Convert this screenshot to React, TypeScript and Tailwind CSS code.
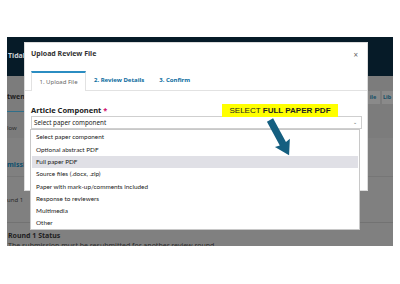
import React from 'react';

const options = [
  'Select paper component',
  'Optional abstract PDF',
  'Full paper PDF',
  'Source files (.docx, .zip)',
  'Paper with mark-up/comments included',
  'Response to reviewers',
  'Multimedia',
  'Other',
];

const Arrow = () => (
  <svg width="45" height="48" viewBox="0 0 45 48" className="absolute left-[255px] top-[115px]">
    <g transform="translate(15,5) rotate(-28.5)">
      <polygon points="-3.5,0 3.5,0 3.5,27 8.5,26 0,40 -8.5,26 -3.5,27" fill="#155f80" />
    </g>
  </svg>
);

const Modal = () => (
  <div className="absolute left-[17px] top-[5px] w-[344px] h-[149px] bg-white border border-[#dcdcdc] font-['Noto_Sans',sans-serif] text-[#222]">
    <div className="flex items-center justify-between pl-[6px] pr-[9px] pt-[3px] h-[20px]">
      <span className="text-[7px] font-bold text-[#333]">Upload Review File</span>
      <span className="text-[8px] leading-none text-[#666]">×</span>
    </div>
    <div className="mt-[8px] flex items-end h-[20px] border-b border-[#e2e2e2] pl-[6px]">
      <div className="h-[20px] w-[55px] flex items-center justify-center border-t-2 border-t-[#2b8dc2] border-x border-x-[#e2e2e2] bg-white text-[6px] text-[#666] -mb-px">
        1. Upload File
      </div>
      <div className="h-[20px] flex items-center ml-[8px] text-[6px] font-bold text-[#0a6b9e]">2. Review Details</div>
      <div className="h-[20px] flex items-center ml-[15px] text-[6px] font-bold text-[#0a6b9e]">3. Confirm</div>
    </div>
    <div className="px-[6px] pt-[14px]">
      <div className="text-[7.5px] font-bold leading-[10px] text-[#222]">
        Article Component <span className="text-[#d00a6c]">*</span>
      </div>
      <div className="mt-[1px] h-[13px] w-[331px] border border-[#cfcfcf] flex items-center justify-between pl-[2px] pr-[4px] text-[6.3px] text-[#222]">
        <span>Select paper component</span>
        <span className="text-[5px] text-[#555]">⌄</span>
      </div>
    </div>
  </div>
);

const Dropdown = () => (
  <div className="absolute left-[23px] top-[92px] w-[330px] h-[101px] bg-white border border-[#c8c8c8] pt-[1px] font-['Lato',sans-serif]">
    {options.map((o) => (
      <div
        key={o}
        className={
          'h-[12.3px] flex items-center pl-[4px] text-[6.4px] text-[#222] mx-[1px] ' +
          (o === 'Full paper PDF' ? 'bg-[#e0e0e6]' : '')
        }
      >
        {o}
      </div>
    ))}
  </div>
);

export default function App() {
  return (
    <div className="w-[400px] h-[284px] bg-white pt-[37px] pl-[7px] relative">
      <div className="relative w-[386px] h-[209px] bg-[#808080] overflow-hidden font-['Noto_Sans',sans-serif]">
        <div className="h-[39px] bg-[#061b28] pl-[1px] pt-[3px]">
          <span className="text-[7px] font-bold text-[#c9cfd3]">Tidal</span>
        </div>
        <div className="h-[62px] bg-[#7c7c7c] flex justify-between">
          <div className="flex flex-col">
            <span className="mt-[16px] text-[7px] leading-[10px] font-bold text-[#1e1e1e]">twen</span>
            <div className="mt-[9px] w-[17px] h-[1px] bg-[#2f6f8a]" />
            <span className="mt-[11px] text-[6px] leading-[10px] text-[#2a2a2a]">low</span>
          </div>
          <div className="flex gap-[2px] mt-[15px] h-[13px]">
            <div className="w-[14px] bg-[#8a8a8a] text-[5.5px] font-bold text-[#154e66] flex items-center justify-center">ile</div>
            <div className="w-[11px] bg-[#8a8a8a] text-[5.5px] font-bold text-[#154e66] flex items-center pl-[1px]">Lib</div>
          </div>
        </div>
        <div className="flex flex-col">
          <span className="mt-[22px] text-[7px] leading-[10px] font-bold text-[#0c4f6c]">missi</span>
          <div className="mt-[6px] h-px bg-[#767676]" />
          <span className="mt-[18px] text-[6px] leading-[10px] text-[#2a2a2a]">und 1</span>
          <div className="mt-[17px] h-px bg-[#727272]" />
        </div>
        <div className="pl-[1px] pt-[8px] text-[7px] leading-[10px]">
          <div className="font-bold text-[#1e1e1e]">Round 1 Status</div>
          <div className="text-[#2a2a2a]">The submission must be resubmitted for another review round.</div>
        </div>
        <Modal />
        <Dropdown />
      </div>
      <div className="absolute left-[222px] top-[104px] w-[116px] h-[13px] bg-[#ffff00] flex items-center justify-center text-[8px] text-[#222] font-['Liberation_Sans',sans-serif]">
        SELECT&nbsp;<b>FULL PAPER PDF</b>
      </div>
      <Arrow />
    </div>
  );
}
